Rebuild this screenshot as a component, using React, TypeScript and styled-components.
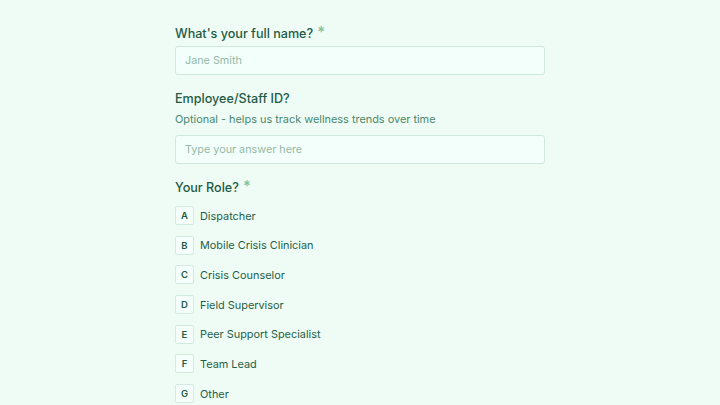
import React from "react";
import styled, { createGlobalStyle } from "styled-components";

const Global = createGlobalStyle`
  html, body { margin: 0; padding: 0; background: #effcf6; }
  body { font-family: Inter, "Noto Sans", sans-serif; color: #1f5a44; }
  * { box-sizing: border-box; }
`;

const Page = styled.div`
  width: 720px;
  height: 405px;
  overflow: hidden;
  background: #effcf6;
  display: flex;
  justify-content: center;
`;

const Form = styled.div`
  width: 370px;
  padding-top: 24px;
  display: flex;
  flex-direction: column;
`;

const Question = styled.div<{ $gap?: number }>`
  display: flex;
  flex-direction: column;
  margin-bottom: ${(p) => p.$gap ?? 16}px;
`;

const Label = styled.div`
  font-size: 12.6px;
  font-weight: 500;
  line-height: 20px;
  color: #1f5a44;
  display: flex;
  align-items: flex-start;
  gap: 4px;
`;

const Star = styled.span`
  color: #7cc4a0;
  font-size: 15px;
  line-height: 15px;
`;

const Helper = styled.div`
  font-size: 10.9px;
  line-height: 16px;
  color: #4a876d;
  margin-top: 2px;
`;

const Input = styled.div<{ $top: number }>`
  margin-top: ${(p) => p.$top}px;
  height: 29px;
  border: 1px solid #cfe9dc;
  border-radius: 3px;
  background: #f3fffa;
  padding: 0 9px;
  display: flex;
  align-items: center;
  font-size: 10.8px;
  color: #93b9a8;
`;

const Options = styled.div`
  display: flex;
  flex-direction: column;
  gap: 10.7px;
  margin-top: 8px;
`;

const Option = styled.div`
  display: flex;
  align-items: center;
  gap: 6px;
  height: 19px;
`;

const Key = styled.span`
  width: 19px;
  height: 19px;
  border: 1px solid #d3ebdf;
  border-radius: 2px;
  background: #f5fffb;
  display: flex;
  align-items: center;
  justify-content: center;
  font-size: 9.5px;
  font-weight: 600;
  color: #1f5a44;
`;

const OptionText = styled.span`
  font-size: 10.9px;
  color: #245f49;
`;

const roles = [
  "Dispatcher",
  "Mobile Crisis Clinician",
  "Crisis Counselor",
  "Field Supervisor",
  "Peer Support Specialist",
  "Team Lead",
  "Other",
];

export default function App() {
  return (
    <>
      <Global />
      <Page>
        <Form>
          <Question $gap={14}>
            <Label>
              What's your full name? <Star>*</Star>
            </Label>
            <Input $top={2}>Jane Smith</Input>
          </Question>
          <Question $gap={14}>
            <Label>Employee/Staff ID?</Label>
            <Helper>Optional - helps us track wellness trends over time</Helper>
            <Input $top={8}>Type your answer here</Input>
          </Question>
          <Question>
            <Label>
              Your Role? <Star>*</Star>
            </Label>
            <Options>
              {roles.map((r, i) => (
                <Option key={r}>
                  <Key>{String.fromCharCode(65 + i)}</Key>
                  <OptionText>{r}</OptionText>
                </Option>
              ))}
            </Options>
          </Question>
        </Form>
      </Page>
    </>
  );
}
